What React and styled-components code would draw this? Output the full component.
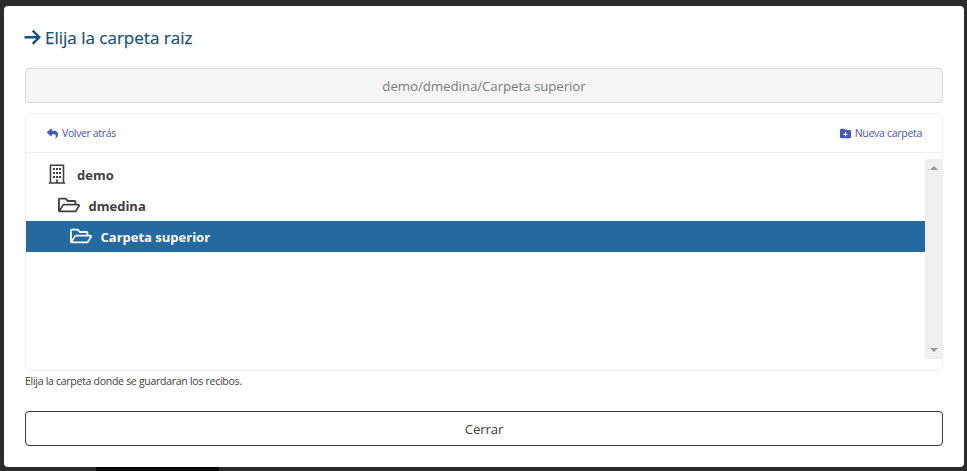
import React from "react";
import styled, { createGlobalStyle } from "styled-components";
import { FaReply, FaFolderPlus } from "react-icons/fa6";
import { FaRegFolderOpen } from "react-icons/fa";

const GlobalStyle = createGlobalStyle`
  * { box-sizing: border-box; }
  body {
    margin: 0;
    overflow: hidden;
    background: #2b2b2b;
    font-family: "Open Sans", "Noto Sans", sans-serif;
  }
`;

const Backdrop = styled.div`
  height: 471px;
  padding: 6px 3px 4px 4px;
  background: linear-gradient(
    to right,
    #2a2a2c 0 96px,
    #060606 96px 219px,
    #2a292e 219px
  ) bottom / 100% 4px no-repeat #2b2b2b;
`;

const Modal = styled.main`
  height: 461px;
  padding: 18px 21px 0;
  display: flex;
  flex-direction: column;
  background: #fff;
  border-radius: 4px;
`;

const Title = styled.h1`
  height: 26px;
  margin: 0 0 18px -1px;
  display: flex;
  align-items: center;
  gap: 4px;
  color: #1b4f7c;
  font-size: 17px;
  font-weight: 500;
  letter-spacing: 0;
  -webkit-text-stroke: 0.25px currentColor;
  white-space: nowrap;
`;

const PathField = styled.div`
  height: 35px;
  flex-shrink: 0;
  display: flex;
  align-items: center;
  justify-content: center;
  background: #f5f5f5;
  border: 1px solid #dbdbdb;
  border-radius: 4px;
  color: #7c7c7c;
  font-size: 13.3px;
  letter-spacing: -0.07px;
`;

const Panel = styled.section`
  height: 258px;
  flex-shrink: 0;
  margin-top: 10px;
  border: 1px solid #f0f0f0;
  border-radius: 4px;
`;

const PanelHeader = styled.header`
  height: 39px;
  padding: 0 20px 0 21px;
  display: flex;
  align-items: center;
  justify-content: space-between;
  border-bottom: 1px solid #f0f0f0;
`;

const Link = styled.a`
  display: flex;
  align-items: center;
  gap: 4px;
  color: #4357bd;
  font-size: 10.5px;
  font-weight: 400;
  letter-spacing: ${(p) => p.$tracking}px;
  white-space: nowrap;
`;

const ListArea = styled.div`
  height: 200px;
  margin-top: 6px;
  display: flex;
`;

const Tree = styled.div`
  flex: 1;
`;

const Row = styled.div`
  height: 31px;
  padding-left: ${(p) => p.$indent}px;
  display: flex;
  align-items: center;
  gap: ${(p) => p.$gap}px;
  background: ${(p) => (p.$selected ? "#24699f" : "transparent")};
  color: ${(p) => (p.$selected ? "#fff" : "#404040")};
  font-size: 13px;
  font-weight: 700;

  svg { flex-shrink: 0; margin-bottom: 2px; }
`;

const Scrollbar = styled.div`
  width: 17px;
  padding: 7px 0;
  display: flex;
  flex-direction: column;
  align-items: center;
  justify-content: space-between;
  background: #f0f0f0;
`;

const Arrow = styled.i`
  border: 4px solid transparent;
  border-width: ${(p) => (p.$up ? "0 4px 4px" : "4px 4px 0")};
  border-color: #999 transparent;
`;

const Help = styled.p`
  height: 20px;
  margin: 0;
  color: #404040;
  font-size: 10.5px;
  line-height: 20px;
  letter-spacing: -0.28px;
`;

const CloseButton = styled.button`
  height: 35px;
  flex-shrink: 0;
  margin-top: 20px;
  background: #fff;
  border: 1px solid #363636;
  border-radius: 4px;
  color: #404040;
  font: 400 13.3px "Open Sans", "Noto Sans", sans-serif;
  letter-spacing: -0.2px;
`;

function ArrowRight() {
  return (
    <svg width="17" height="16" viewBox="0 0 17 16" fill="none" stroke="currentColor" strokeWidth="2.4">
      <path d="M.5 8.2H15M8.7 1.6l6.6 6.6-6.6 6.6" />
    </svg>
  );
}

function Building() {
  return (
    <svg width="18" height="20" viewBox="0 0 18 20" fill="none" stroke="currentColor">
      <path strokeWidth="1.6" d="M2.5 19V1.3h13V19M.8 19h16.4" />
      <path strokeWidth="1.7" d="M9 15.5V19" />
      <path strokeWidth="2" strokeDasharray="2 2" d="M6 4v10M9 4v10M12 4v10" />
    </svg>
  );
}

export default function App() {
  return (
    <>
      <GlobalStyle />
      <Backdrop>
        <Modal>
          <Title>
            <ArrowRight />
            <span>Elija la carpeta raiz</span>
          </Title>
          <PathField><span>demo/dmedina/Carpeta superior</span></PathField>
          <Panel>
            <PanelHeader>
              <Link $tracking={-0.36}><FaReply size={11} /><span>Volver atrás</span></Link>
              <Link $tracking={-0.29}><FaFolderPlus size={11} /><span>Nueva carpeta</span></Link>
            </PanelHeader>
            <ListArea>
              <Tree>
                <Row $indent={22} $gap={11}>
                  <Building /><span>demo</span>
                </Row>
                <Row $indent={32} $gap={8.5}>
                  <FaRegFolderOpen size={22} /><span>dmedina</span>
                </Row>
                <Row $indent={44} $gap={8.5} $selected>
                  <FaRegFolderOpen size={22} /><span>Carpeta superior</span>
                </Row>
              </Tree>
              <Scrollbar><Arrow $up /><Arrow /></Scrollbar>
            </ListArea>
          </Panel>
          <Help><span>Elija la carpeta donde se guardaran los recibos.</span></Help>
          <CloseButton><span>Cerrar</span></CloseButton>
        </Modal>
      </Backdrop>
    </>
  );
}
